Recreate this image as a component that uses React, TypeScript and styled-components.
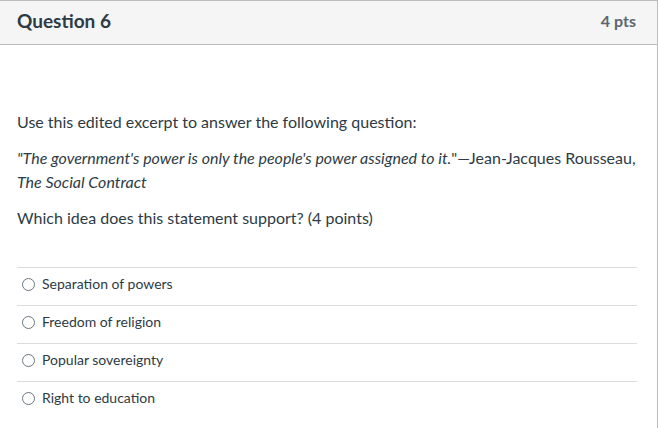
import React from "react";
import styled, { createGlobalStyle } from "styled-components";

const answers = ["Separation of powers", "Freedom of religion", "Popular sovereignty", "Right to education"];

export default function App() {
    return (
        <>
            <GlobalStyle />
            <Card>
                <Header>
                    <Title>Question 6</Title>
                    <Points>4 pts</Points>
                </Header>
                <Body>
                    <Text>Use this edited excerpt to answer the following question:</Text>
                    <Text>
                        <em>"The government's power is only the people's power assigned to it.</em>"—Jean-Jacques Rousseau,{" "}
                        <em>The Social Contract</em>
                    </Text>
                    <Text>Which idea does this statement support? (4 points)</Text>
                    <Answers>
                        {answers.map((a) => (
                            <Answer key={a}>
                                <Radio />
                                <AnswerLabel>{a}</AnswerLabel>
                            </Answer>
                        ))}
                    </Answers>
                </Body>
            </Card>
        </>
    );
}

const GlobalStyle = createGlobalStyle`
    body {
        margin: 0;
        background: #fff;
        font-family: Lato, "Open Sans", sans-serif;
        color: #2d3b45;
    }
`;

const Card = styled.div`
    width: 658px;
    height: 428px;
    box-sizing: border-box;
    border-top: 1px solid #b9bdc0;
    border-right: 1px solid #b9bdc0;
    overflow: hidden;
`;

const Header = styled.div`
    display: flex;
    justify-content: space-between;
    align-items: center;
    height: 39px;
    padding: 0 21px 4px 17px;
    background: #f5f5f5;
    border-bottom: 1px solid #b9bdc0;
`;

const Title = styled.div`
    font-size: 19px;
    font-weight: 700;
    color: #2d3b45;
`;

const Points = styled.div`
    font-size: 16px;
    font-weight: 700;
    color: #5b6670;
`;

const Body = styled.div`
    padding: 65px 20px 0 17px;
`;

const Text = styled.p`
    margin: 0 0 12px;
    font-size: 16px;
    line-height: 24px;
`;

const Answers = styled.div`
    margin-top: 37px;
`;

const Answer = styled.div`
    display: flex;
    align-items: center;
    height: 31px;
    padding-bottom: 6px;
    border-top: 1px solid #dadcde;
`;

const Radio = styled.span`
    width: 11px;
    height: 11px;
    margin: 1px 7px 0 5px;
    border: 1px solid #6b7680;
    border-radius: 50%;
    background: #fff;
`;

const AnswerLabel = styled.span`
    font-size: 14px;
    color: #2d3b45;
`;
